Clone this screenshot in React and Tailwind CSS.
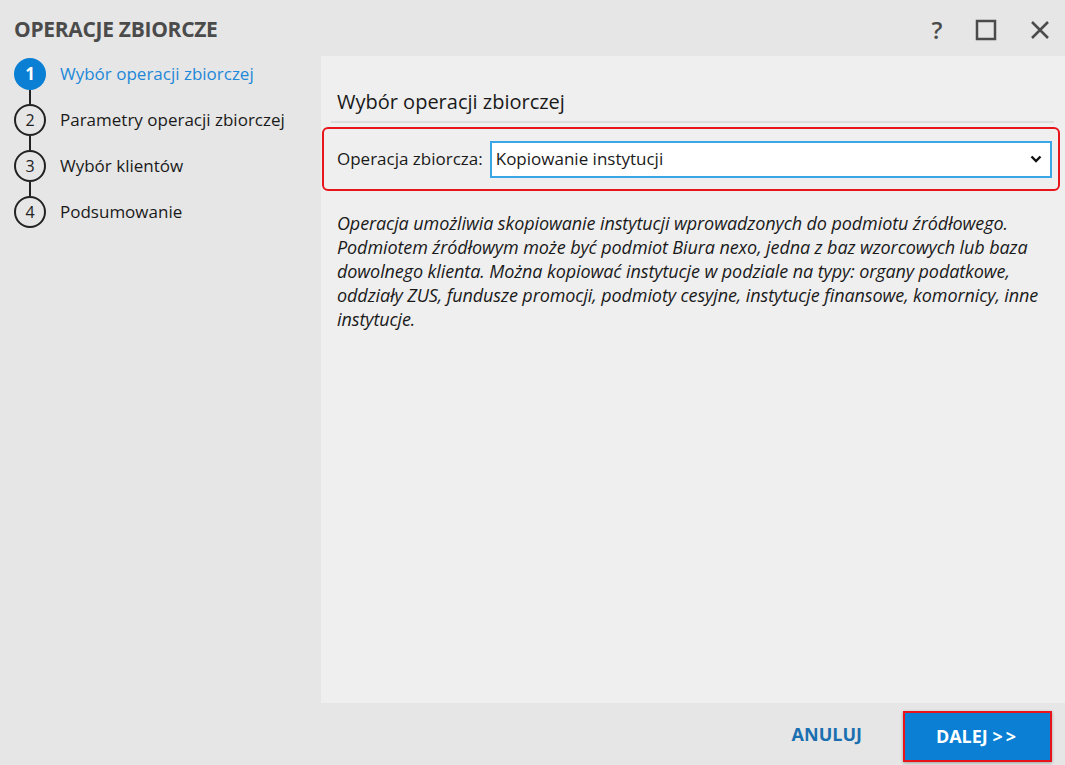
const steps = ["Wybór operacji zbiorczej", "Parametry operacji zbiorczej", "Wybór klientów", "Podsumowanie"];

export default function App() {
  return (
    <div
      className="w-[1065px] h-[765px] bg-[#e6e6e6] flex flex-col text-[#1a1a1a] overflow-hidden"
      style={{ fontFamily: '"Open Sans", "Noto Sans", sans-serif' }}>
      {/* Title bar */}
      <div className="h-[56px] flex items-center justify-between pl-[14px] pr-[14px] pt-[4px] shrink-0">
        <h1 className="text-[21px] font-bold text-[#4b4b4b] tracking-[-0.3px]">OPERACJE ZBIORCZE</h1>
        <div className="flex items-center text-[#4b4b4b]">
          <span className="text-[24px] font-semibold leading-none w-[24px] text-center">?</span>
          <svg className="ml-[26px]" width="22" height="22" viewBox="0 0 22 22">
            <rect x="2" y="2" width="18" height="18" fill="none" stroke="#4b4b4b" strokeWidth="2.5" />
          </svg>
          <svg className="ml-[32px]" width="22" height="22" viewBox="0 0 22 22">
            <path d="M3 3 L19 19 M19 3 L3 19" stroke="#4b4b4b" strokeWidth="2.5" />
          </svg>
        </div>
      </div>

      <div className="flex flex-1 min-h-0">
        {/* Stepper */}
        <div className="w-[321px] shrink-0 pl-[14px] pt-[2px]">
          {steps.map((s, i) => (
            <div key={s} className="flex items-start">
              <div className="flex flex-col items-center w-[32px]">
                <div
                  className={
                    i === 0
                      ? "w-[32px] h-[32px] rounded-full bg-[#0a7fd4] text-white font-bold flex items-center justify-center text-[17px]"
                      : "w-[32px] h-[32px] rounded-full border-2 border-[#222] text-[#222] flex items-center justify-center text-[16px]"
                  }>
                  {i + 1}
                </div>
                {i < steps.length - 1 && <div className="w-[2px] h-[14px] bg-[#222]" />}
              </div>
              <span
                className={
                  "ml-[14px] h-[32px] flex items-center text-[17px] " +
                  (i === 0 ? "text-[#1e88d8]" : "text-[#1a1a1a]")
                }>
                {s}
              </span>
            </div>
          ))}
        </div>

        {/* Content panel */}
        <div className="flex-1 bg-[#efefef] pt-[30px] pl-[10px] pr-[5px]">
          <h2 className="text-[20px] text-[#1a1a1a] pl-[6px] leading-[32px]">Wybór operacji zbiorczej</h2>
          <div className="h-[2px] bg-[#dcdcdc] mt-[3px] mr-[6px]" />
          <div className="-ml-[9px] mt-[4px] border-2 border-[#e8141c] rounded-[6px] h-[64px] flex items-center pl-[13px] pr-[6px]">
            <span className="text-[17px] mr-[7px]">Operacja zbiorcza:</span>
            <div className="flex-1 h-[37px] bg-white border-2 border-[#3aa6e8] flex items-center justify-between pl-[4px] pr-[8px]">
              <span className="text-[17px]">Kopiowanie instytucji</span>
              <svg width="12" height="8" viewBox="0 0 12 8">
                <path d="M1.5 1.5 L6 6 L10.5 1.5" fill="none" stroke="#111" strokeWidth="2.4" />
              </svg>
            </div>
          </div>
          <p className="italic text-[18px] leading-[24px] mt-[20px] pl-[6px] pr-[10px] text-[#1a1a1a] tracking-[-0.1px]">
            Operacja umożliwia skopiowanie instytucji wprowadzonych do podmiotu źródłowego. Podmiotem źródłowym może być
            podmiot Biura nexo, jedna z baz wzorcowych lub baza dowolnego klienta. Można kopiować instytucje w podziale
            na typy: organy podatkowe, oddziały ZUS, fundusze promocji, podmioty cesyjne, instytucje finansowe,
            komornicy, inne instytucje.
          </p>
        </div>
      </div>

      {/* Footer */}
      <div className="h-[62px] shrink-0 flex items-center justify-end pr-[13px] gap-[41px]">
        <button className="text-[18px] font-bold text-[#1a6fb0]">ANULUJ</button>
        <button className="w-[149px] h-[51px] mt-[4px] bg-[#0a7fd4] border-2 border-[#e8141c] text-white font-bold text-[18px] shadow-[0_1px_3px_rgba(0,0,0,0.3)]">
          DALEJ <span className="tracking-[3px]">&gt;&gt;</span>
        </button>
      </div>
    </div>
  );
}
